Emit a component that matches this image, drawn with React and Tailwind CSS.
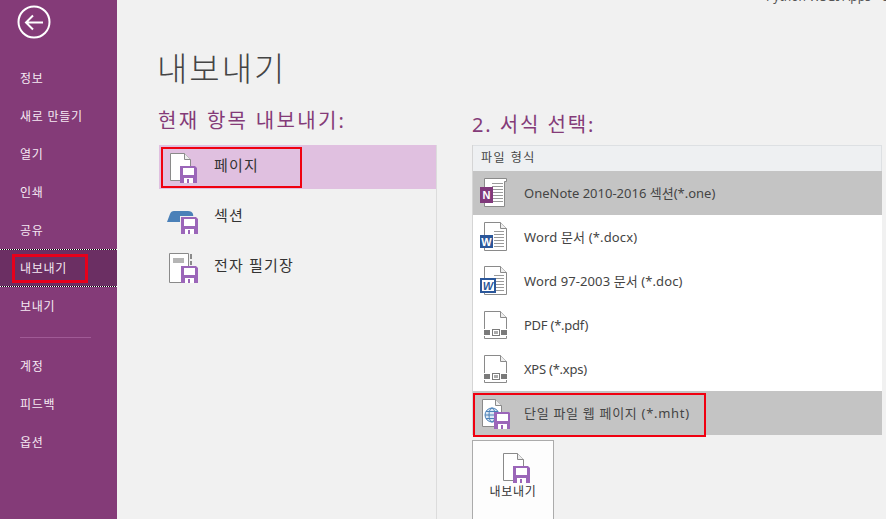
import React from 'react';

const NAV_TOP = ['정보', '새로 만들기', '열기', '인쇄', '공유'];
const NAV_BOTTOM = ['계정', '피드백', '옵션'];

/* floppy badge shared by the export icons, drawn at x,y in a 32 box */
function Floppy({ x = 14, y = 14 }) {
  return (
    <g transform={`translate(${x} ${y})`}>
      <path d="M0 0h15l2 2v15H0z" fill="#9b66b9" />
      <rect x="3" y="2" width="11" height="7" fill="#fff" />
      <rect x="4" y="12" width="9" height="5" fill="#fff" />
      <rect x="7" y="13" width="2" height="4" fill="#9b66b9" />
    </g>
  );
}

function PageSave() {
  return (
    <svg width="32" height="32" viewBox="0 0 32 32">
      <path d="M2.5 2.5h14l6 6v21h-20z" fill="#fff" stroke="#8a8a8a" />
      <path d="M16.5 2.5v6h6" fill="#eee" stroke="#8a8a8a" />
      <Floppy x={12} y={15} />
    </svg>
  );
}

function SectionSave() {
  return (
    <svg width="32" height="32" viewBox="0 0 32 32" className="overflow-visible">
      <path d="M-1 21l3-8q1-3 4-3h14q4 0 5 3l1 8z" fill="#4a80b8" />
      <rect x="12" y="15" width="19" height="19" fill="#f1f1f1" />
      <Floppy x={13} y={16} />
    </svg>
  );
}

function NotebookSave() {
  return (
    <svg width="32" height="32" viewBox="0 0 32 32">
      <path d="M1.5 2.5h19v29h-19z" fill="#fff" stroke="#8a8a8a" />
      <rect x="5" y="7" width="11" height="5" fill="#b5b5b5" />
      <rect x="22" y="3" width="2" height="5" fill="#8a8a8a" />
      <rect x="22" y="10" width="2" height="4" fill="#8a8a8a" />
      <Floppy x={13} y={15} />
    </svg>
  );
}

function Lines({ x, y, w, n, gap = 3 }) {
  return (
    <g stroke="#9a9a9a">
      {[...Array(n)].map((_, i) => (
        <path key={i} d={`M${x} ${y + i * gap + 0.5}h${w}`} />
      ))}
    </g>
  );
}

function OneNoteIcon() {
  return (
    <svg width="32" height="32" viewBox="0 0 32 32">
      <path d="M6.5 1.5h22v3h-2v25h-20z" fill="#fff" stroke="#8a8a8a" />
      <Lines x={14} y={6} w={11} n={7} />
      <rect x="2" y="10" width="13" height="16" fill="#80397b" />
      <text x="8.5" y="22" textAnchor="middle" fontSize="11" fontWeight="700" fill="#fff" fontFamily="Liberation Sans">N</text>
    </svg>
  );
}

function WordIcon({ old }) {
  return (
    <svg width="32" height="32" viewBox="0 0 32 32">
      <path d="M6.5 1.5h16l6 6v22h-22z" fill="#fff" stroke="#8a8a8a" />
      <path d="M22.5 1.5v6h6" fill="#eee" stroke="#8a8a8a" />
      <Lines x={16} y={10} w={10} n={6} />
      {old ? (
        <>
          <rect x="3" y="14" width="14" height="13" fill="#fff" stroke="#2b579a" strokeWidth="2" />
          <text x="10" y="24.5" textAnchor="middle" fontSize="11" fontWeight="700" fontStyle="italic" fill="#2b579a" fontFamily="Liberation Sans">W</text>
        </>
      ) : (
        <>
          <rect x="2" y="14" width="13" height="13" fill="#2b579a" />
          <text x="8.5" y="24.5" textAnchor="middle" fontSize="11" fontWeight="700" fill="#fff" fontFamily="Liberation Sans">W</text>
        </>
      )}
    </svg>
  );
}

function FixedDocIcon() {
  return (
    <svg width="32" height="32" viewBox="0 0 32 32">
      <path d="M6.5 20V2.5h16l6 6V20M6.5 27v2.5h22V27" fill="none" stroke="#8a8a8a" />
      <path d="M22.5 2.5v6h6" fill="#eee" stroke="#8a8a8a" />
      <rect x="6" y="21" width="6" height="5" fill="#7a7a7a" />
      <rect x="23" y="21" width="6" height="5" fill="#7a7a7a" />
      <rect x="14.5" y="20.5" width="7" height="6" fill="#fff" stroke="#7a7a7a" />
      <rect x="16" y="22" width="4" height="3" fill="#aaa" />
    </svg>
  );
}

function WebSave() {
  return (
    <svg width="32" height="32" viewBox="0 0 32 32">
      <path d="M4.5 2.5h13l6 6v21h-19z" fill="#fff" stroke="#8a8a8a" />
      <path d="M17.5 2.5v6h6" fill="#eee" stroke="#8a8a8a" />
      <g fill="none" stroke="#4a80b8">
        <circle cx="14" cy="18" r="7" fill="#dce8f4" />
        <ellipse cx="14" cy="18" rx="3" ry="7" />
        <path d="M7 18h14M8 14.5h12M8 21.5h12" />
      </g>
      <Floppy x={16} y={15} />
    </svg>
  );
}

const FORMATS = [
  { label: 'OneNote 2010-2016 섹션(*.one)', Icon: OneNoteIcon, on: true, track: 'tracking-[0px]' },
  { label: 'Word 문서 (*.docx)', Icon: () => <WordIcon />, track: 'tracking-[0.15px]' },
  { label: 'Word 97-2003 문서 (*.doc)', Icon: () => <WordIcon old />, track: 'tracking-[0.1px]' },
  { label: 'PDF (*.pdf)', Icon: FixedDocIcon, track: 'tracking-[-0.25px]' },
  { label: 'XPS (*.xps)', Icon: FixedDocIcon, track: 'tracking-[-0.25px]' },
  { label: '단일 파일 웹 페이지 (*.mht)', Icon: WebSave, on: true, marked: true, track: 'tracking-[0.7px]' },
];

function NavItem({ label }) {
  return (
    <div className="h-[38px] flex items-center pl-5 text-[12px] tracking-[0.75px] text-[#f5e9f3]">{label}</div>
  );
}

function Sidebar() {
  return (
    <aside className="w-[117px] shrink-0 bg-[#843b78] flex flex-col">
      <div className="h-[59px] pl-[17px] pt-[5px]">
        <svg width="34" height="34" viewBox="0 0 34 34" fill="none" stroke="#fff" strokeWidth="2">
          <circle cx="17" cy="17" r="15.5" />
          <path d="M26 17.5H9M16 10.5l-7 7 7 7" />
        </svg>
      </div>
      <div className="h-px" />
      {NAV_TOP.map((n) => <NavItem key={n} label={n} />)}
      <div className="relative h-[38px] -mt-px mb-px pt-px flex items-center pl-5 text-[12px] tracking-[0.75px] text-[#f5e9f3] bg-[#6b2f63]">
        내보내기
        <span className="absolute inset-x-0 top-0 h-px bg-[repeating-linear-gradient(90deg,#fff_0_1px,#000_1px_2px)]" />
        <span className="absolute inset-x-0 bottom-0 h-px bg-[repeating-linear-gradient(90deg,#fff_0_1px,#000_1px_2px)]" />
        <span className="absolute left-[12px] top-[5px] w-[76px] h-[29px] border-[3px] border-[#e8001c]" />
      </div>
      <NavItem label="보내기" />
      <div className="h-[22px] pl-5 pt-[11px]">
        <div className="w-[71px] h-px bg-[#a05a96]" />
      </div>
      {NAV_BOTTOM.map((n) => <NavItem key={n} label={n} />)}
    </aside>
  );
}

function ExportRow({ Icon, label, on, marked }) {
  return (
    <div className={`relative flex items-center h-11 pl-[9px] ${on ? 'bg-[#e0c0e0]' : ''}`}>
      <div className="w-[46px] shrink-0"><Icon /></div>
      <span className="-mt-1 text-[15px] tracking-[1.2px] text-[#333]">{label}</span>
      {marked && <span className="absolute left-[2px] top-[2px] w-[141px] h-[41px] border-2 border-[#f00010]" />}
    </div>
  );
}

function FormatRow({ label, Icon, on, marked, track }) {
  return (
    <div className={`relative flex items-center h-11 pl-[5px] ${on ? 'bg-[#c4c4c4]' : 'bg-white'}`}>
      <div className="w-[46px] shrink-0"><Icon /></div>
      <span className={`mt-0.5 text-[13px] text-[#444] ${track}`}>{label}</span>
      {marked && <span className="absolute left-0 top-[2px] w-[233px] h-[44px] border-2 border-[#f00010] z-10" />}
    </div>
  );
}

export default function App() {
  return (
    <div className="w-[886px] h-[519px] overflow-hidden flex bg-[#f1f1f1] [font-family:'Noto_Sans','Noto_Sans_CJK_KR',sans-serif]">
      <Sidebar />
      <main className="flex-1 min-w-0 flex flex-col">
        <div className="h-[53px] pl-[649px] -mt-[11px] text-[12px] leading-[16px] whitespace-nowrap text-[#555] overflow-hidden">
          Python WSGI Apps - OneNote
        </div>
        <h1 className="pl-[40px] mt-[4px] h-[62px] text-[33px] leading-[46px] font-light text-[#444] tracking-[2px]">내보내기</h1>
        <div className="flex flex-1 min-h-0">
          <section className="w-[320px] pl-[41px] shrink-0">
            <h2 className="h-[37px] -mt-px mb-px text-[20px] leading-[28px] tracking-[2.3px] text-[#843b78]">현재 항목 내보내기:</h2>
            <div className="ml-px w-[278px] h-[400px] border-r border-[#dcdcdc] flex flex-col gap-1.5">
              <ExportRow Icon={PageSave} label="페이지" on marked />
              <ExportRow Icon={SectionSave} label="섹션" />
              <ExportRow Icon={NotebookSave} label="전자 필기장" />
            </div>
          </section>
          <section className="w-[410px] ml-[35px] shrink-0">
            <h2 className="h-[26px] mt-[3px] text-[20px] leading-[28px] tracking-[1.9px] text-[#843b78]">2. 서식 선택:</h2>
            <div className="mt-[8px] border-l border-[#d5d5d5]">
              <div className="h-[26px] border-t border-r border-[#dde0e3] bg-[#eef0f2] pl-2 text-[12px] leading-[24px] text-[#444] tracking-[1.5px]">파일 형식</div>
              {FORMATS.map((f) => <FormatRow key={f.label} {...f} />)}
            </div>
            <div className="mt-[5px] w-[82px] h-[90px] border border-[#ababab] bg-[#fdfdfd] flex flex-col items-center pt-[10px]">
              <div className="ml-2"><PageSave /></div>
              <span className="text-[12px] tracking-[0.7px] text-[#333]">내보내기</span>
            </div>
          </section>
        </div>
      </main>
    </div>
  );
}
